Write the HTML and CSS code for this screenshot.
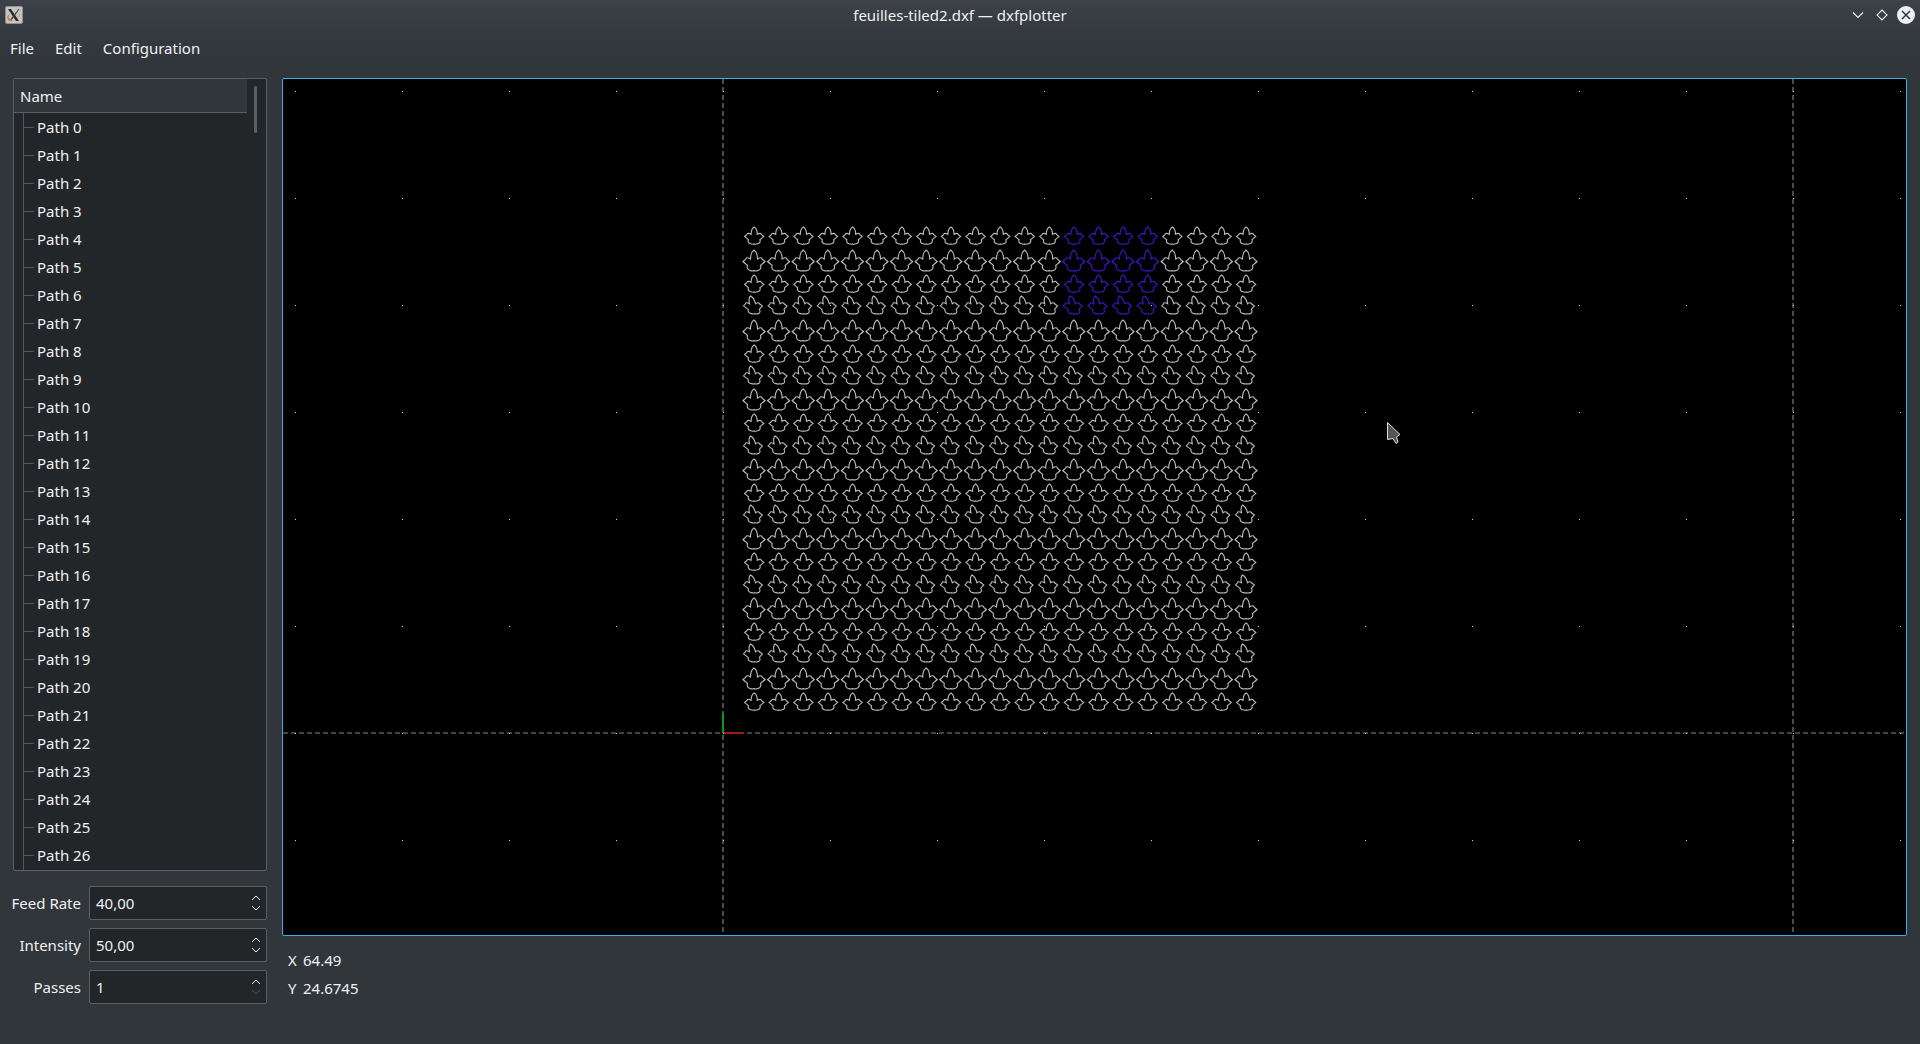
FILE: index.html
```html
<!DOCTYPE html>
<html lang="en">
<head>
  <meta charset="UTF-8">
  <title>feuilles-tiled2.dxf — dxfplotter</title>
  <link rel="stylesheet" href="styles.css">
</head>
<body>
  <!-- Window title bar -->
  <header class="titlebar">
    <svg class="app-icon" width="18" height="18" viewBox="0 0 18 18">
      <rect x="0.5" y="0.5" width="17" height="17" rx="1.5" fill="#c4c4c2" stroke="#8d8f90"/>
      <path d="M3 3 L6 3 L14 15 L11 15 Z" fill="#2a2a2a"/>
      <path d="M13.5 3 L14.5 3 L6 15 L4 15 Z" fill="#3a3a3a"/>
      <path d="M4 9 C2 11 3 15 7 14" fill="none" stroke="#d9763a" stroke-width="1.4"/>
      <path d="M12 11 C14 12 15 10 14.5 8" fill="none" stroke="#d9a06a" stroke-width="1"/>
    </svg>
    <div class="title">feuilles-tiled2.dxf — dxfplotter</div>
    <div class="window-buttons">
      <svg width="12" height="12" viewBox="0 0 12 12"><path d="M1 3.5 L6 8.5 L11 3.5" fill="none" stroke="#eff0f1" stroke-width="1.1"/></svg>
      <svg width="12" height="12" viewBox="0 0 12 12"><path d="M6 1 L11 6 L6 11 L1 6 Z" fill="none" stroke="#eff0f1" stroke-width="1.1"/></svg>
      <svg class="close-btn" width="18" height="18" viewBox="0 0 18 18"><circle cx="9" cy="9" r="9" fill="#eff0f1"/><path d="M5 5 L13 13 M13 5 L5 13" stroke="#31363b" stroke-width="1.5"/></svg>
    </div>
  </header>

  <!-- Menu bar -->
  <nav class="menubar">
    <span class="menu-item">File</span>
    <span class="menu-item">Edit</span>
    <span class="menu-item">Configuration</span>
  </nav>

  <main class="content">
    <!-- Left column: path tree and settings -->
    <aside class="sidebar">
      <div class="tree">
        <div class="tree-main">
          <div class="tree-header">Name</div>
          <ul class="tree-list">
            <li>Path 0</li><li>Path 1</li><li>Path 2</li><li>Path 3</li><li>Path 4</li>
            <li>Path 5</li><li>Path 6</li><li>Path 7</li><li>Path 8</li><li>Path 9</li>
            <li>Path 10</li><li>Path 11</li><li>Path 12</li><li>Path 13</li><li>Path 14</li>
            <li>Path 15</li><li>Path 16</li><li>Path 17</li><li>Path 18</li><li>Path 19</li>
            <li>Path 20</li><li>Path 21</li><li>Path 22</li><li>Path 23</li><li>Path 24</li>
            <li>Path 25</li><li>Path 26</li>
          </ul>
        </div>
        <div class="tree-scroll"><div class="tree-handle"></div></div>
      </div>

      <div class="settings">
        <label class="setting-label">Feed Rate</label>
        <div class="spinbox">40,00
          <svg class="spin-arrows" width="10" height="16" viewBox="0 0 10 16"><path d="M1 5 L5 1 L9 5" class="arrow"/><path d="M1 11 L5 15 L9 11" class="arrow"/></svg>
        </div>
        <label class="setting-label">Intensity</label>
        <div class="spinbox">50,00
          <svg class="spin-arrows" width="10" height="16" viewBox="0 0 10 16"><path d="M1 5 L5 1 L9 5" class="arrow"/><path d="M1 11 L5 15 L9 11" class="arrow"/></svg>
        </div>
        <label class="setting-label">Passes</label>
        <div class="spinbox">1
          <svg class="spin-arrows" width="10" height="16" viewBox="0 0 10 16"><path d="M1 5 L5 1 L9 5" class="arrow"/><path d="M1 11 L5 15 L9 11" class="arrow arrow-off"/></svg>
        </div>
      </div>
    </aside>

    <!-- Right column: plot view and coordinates -->
    <section class="view">
      <div class="plot">
        <svg class="plot-svg" viewBox="283 79 1623 856" width="1623" height="856">
          <defs>
            <pattern id="dots" x="295" y="91" width="107" height="107" patternUnits="userSpaceOnUse">
              <rect width="1" height="1" fill="#d8d8d8"/>
            </pattern>
            <path id="leaf-t" vector-effect="non-scaling-stroke" d="M11 0 C9.5 1 7.5 3.5 7.5 9 C6 8 4.5 7.5 3.5 8 C3 9.5 1.5 10.5 0 11.5 C1.5 13 3 14 4.5 15.5 C3.5 18 5 20 7 20.5 C8.5 21 10 21.5 11 20.5 C12 21.5 13.5 21 15 20.5 C17 20 18.5 18 17.5 15.5 C19 14 20.5 13 22 11.5 C20.5 10.5 19 9.5 18.5 8 C17.5 7.5 16 8 14.5 9 C14.5 3.5 12.5 1 11 0 Z"/>
            <use id="leaf-s" href="#leaf-t" transform="translate(1.5 0) scale(.88 .82)"/>
            <use id="leaf-m" href="#leaf-t" transform="matrix(.86 0 .2 .86 -1.8 0)"/>

            <!-- one column of leaves, rows sit on uneven pixel steps -->
            <g id="column">
              <use href="#leaf-s" y="227"/>
              <use href="#leaf-t" y="250"/>
              <use href="#leaf-s" y="275"/>
              <use href="#leaf-m" y="296"/>
              <use href="#leaf-t" y="320"/>
              <use href="#leaf-s" y="345"/>
              <use href="#leaf-m" y="366"/>
              <use href="#leaf-t" y="389"/>
              <use href="#leaf-s" y="414"/>
              <use href="#leaf-m" y="436"/>
              <use href="#leaf-t" y="459"/>
              <use href="#leaf-s" y="484"/>
              <use href="#leaf-m" y="505"/>
              <use href="#leaf-t" y="528"/>
              <use href="#leaf-s" y="553"/>
              <use href="#leaf-m" y="575"/>
              <use href="#leaf-t" y="598"/>
              <use href="#leaf-s" y="623"/>
              <use href="#leaf-m" y="644"/>
              <use href="#leaf-t" y="668"/>
              <use href="#leaf-s" y="693"/>
            </g>
            <g id="column-top">
              <use href="#leaf-s" y="227"/>
              <use href="#leaf-t" y="250"/>
              <use href="#leaf-s" y="275"/>
              <use href="#leaf-m" y="296"/>
            </g>
          </defs>

          <!-- guide lines -->
          <path class="guide" d="M723 79 V932 M1793 79 V932 M283 733 H1906"/>

          <!-- tiled leaves -->
          <g class="leaves">
            <use href="#column" x="743"/><use href="#column" x="767.6"/><use href="#column" x="792.2"/>
            <use href="#column" x="816.8"/><use href="#column" x="841.4"/><use href="#column" x="866"/>
            <use href="#column" x="890.6"/><use href="#column" x="915.2"/><use href="#column" x="939.8"/>
            <use href="#column" x="964.4"/><use href="#column" x="989"/><use href="#column" x="1013.6"/>
            <use href="#column" x="1038.2"/><use href="#column" x="1062.8"/><use href="#column" x="1087.4"/>
            <use href="#column" x="1112"/><use href="#column" x="1136.6"/><use href="#column" x="1161.2"/>
            <use href="#column" x="1185.8"/><use href="#column" x="1210.4"/><use href="#column" x="1235"/>
          </g>

          <!-- selected paths -->
          <rect x="1061" y="225" width="99" height="92" fill="#000"/>
          <g class="leaves-selected">
            <use href="#column-top" x="1062.8"/><use href="#column-top" x="1087.4"/>
            <use href="#column-top" x="1112"/><use href="#column-top" x="1136.6"/>
          </g>

          <!-- origin axes -->
          <rect x="722" y="713" width="2" height="20" fill="#0a9a14"/>
          <rect x="724" y="732" width="19" height="2" fill="#a3161c"/>

          <rect x="283" y="79" width="1623" height="856" fill="url(#dots)"/>

          <!-- mouse cursor -->
          <path d="M1387.5 422.5 V439.5 L1393 438.5 L1396 443.5 L1398 442 L1396.5 437 L1400 434.5 Z" fill="#555" stroke="#ddd"/>
        </svg>
      </div>
      <div class="coords">
        <div class="coord"><span class="coord-name">X</span><span>64.49</span></div>
        <div class="coord"><span class="coord-name">Y</span><span>24.6745</span></div>
      </div>
    </section>
  </main>
</body>
</html>
```

FILE: styles.css
```css
/* General Styles */
* {
  box-sizing: border-box;
}

body {
  margin: 0;
  height: 100vh;
  overflow: hidden;
  display: flex;
  flex-direction: column;
  background: #31363b;
  color: #eff0f1;
  font-family: 'Noto Sans', sans-serif;
  font-size: 15px;
}

/* Title Bar */
.titlebar {
  height: 30px;
  flex: none;
  display: flex;
  align-items: center;
  justify-content: space-between;
  padding: 0 5px;
  position: relative;
  background: linear-gradient(#3d4248, #343a3f);
}

.app-icon {
  display: block;
}

.title {
  position: absolute;
  left: 0;
  right: 0;
  text-align: center;
}

.window-buttons {
  display: flex;
  align-items: center;
  gap: 12px;
}

.close-btn {
  margin-left: -3px;
}

/* Menu Bar */
.menubar {
  height: 34px;
  flex: none;
  display: flex;
  align-items: center;
  gap: 21px;
  padding: 1px 0 0 10px;
  background: linear-gradient(#343a3f, #31363b);
}

/* Main Content */
.content {
  flex: 1;
  min-height: 0;
  display: flex;
  gap: 15px;
  padding: 14px 13px 0 13px;
}

.sidebar {
  width: 254px;
  flex: none;
  display: flex;
  flex-direction: column;
  gap: 15px;
}

/* Path Tree */
.tree {
  height: 793px;
  display: flex;
  background: #232629;
  border: 1px solid #5b5f63;
  border-radius: 2px;
  overflow: hidden;
}

.tree-main {
  flex: 1;
  min-width: 0;
  display: flex;
  flex-direction: column;
}

.tree-header {
  height: 34px;
  flex: none;
  padding: 0 0 0 6px;
  line-height: 34px;
  background: #31363b;
  border-bottom: 1px solid #5b5f63;
}

.tree-list {
  list-style: none;
  margin: 0 0 0 9px;
  padding: 0;
  border-left: 1px solid #53575b;
  flex: 1;
  overflow: hidden;
}

.tree-list li {
  height: 28px;
  line-height: 28px;
  padding-left: 13px;
  position: relative;
}

.tree-list li::before {
  content: "";
  position: absolute;
  left: 0;
  top: 14px;
  width: 10px;
  height: 1px;
  background: #53575b;
}

.tree-scroll {
  width: 19px;
  flex: none;
  padding: 7px 0 0 7px;
}

.tree-handle {
  width: 3px;
  height: 47px;
  border-radius: 2px;
  background: #5b5f63;
}

/* Settings Form */
.settings {
  display: grid;
  grid-template-columns: 68px 1fr;
  column-gap: 8px;
  row-gap: 8px;
}

.setting-label {
  justify-self: end;
  white-space: nowrap;
  line-height: 34px;
}

.spinbox {
  height: 34px;
  line-height: 32px;
  padding-left: 6px;
  background: #232629;
  border: 1px solid #5b5f63;
  border-radius: 2px;
  position: relative;
}

.spin-arrows {
  position: absolute;
  right: 5px;
  top: 8px;
}

.arrow {
  fill: none;
  stroke: #eff0f1;
  stroke-width: 1;
}

.arrow-off {
  stroke: #55595d;
}

/* Plot View */
.view {
  flex: 1;
  min-width: 0;
}

.plot {
  height: 858px;
  background: #000;
  border: 1px solid #3daee9;
  border-radius: 2px;
  overflow: hidden;
}

.plot-svg {
  display: block;
}

.guide {
  fill: none;
  stroke: #5a5a5a;
  stroke-width: 1.7;
  stroke-dasharray: 5 3;
}

.leaves {
  fill: none;
  stroke: #bdbdbd;
  stroke-width: 1.1;
}

.leaves-selected {
  fill: none;
  stroke: #4414d0;
  stroke-width: 1.1;
}

/* Coordinates */
.coords {
  padding: 10px 0 0 6px;
}

.coord {
  height: 28px;
  line-height: 28px;
  display: flex;
}

.coord-name {
  width: 15px;
}
```
